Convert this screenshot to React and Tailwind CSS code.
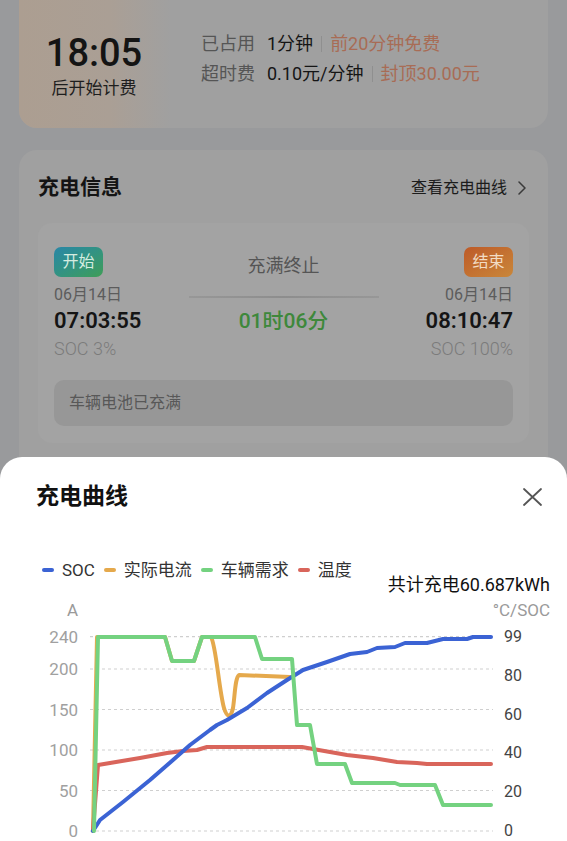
import React from 'react';

// ── chart data, in page pixels (plot box x 90–493, y 637–831) ───────────────
const LEFT_TICKS = [240, 200, 150, 100, 50, 0];
const RIGHT_TICKS = ['99', '80', '60', '40', '20', '0'];
const yOf = (v) => 831 - v * 0.81;

const GREEN = 'M94,831 L98,637 L165,637 L172,661 L194,661 L202,637 L255,637 L262,659 L292,659 L297,725 L310,725 L317,764 L345,764 L352,783 L395,783 L400,785 L435,785 L443,805 L491,805';
// actual current follows the demand until it falls away at ~212px
const ORANGE = 'M93,831 L97,637 L165,637 L172,661 L194,661 L202,637 L211,637 C216,645 219,690 224,708 C227,718 231,718 233,708 C235,695 235,678 239,675 L290,677';
const BLUE = [
    [93, 831], [100, 820], [123, 802], [150, 780], [173, 760], [190, 745], [210, 730], [217, 725],
    [227, 720], [247, 708], [267, 693], [287, 680], [303, 670], [327, 662], [350, 654], [367, 652],
    [377, 648], [395, 647], [405, 643], [427, 643], [443, 639], [467, 639], [473, 637], [491, 637],
];
const RED = [
    [93, 830], [98, 765], [110, 763], [140, 758], [167, 753], [183, 751], [197, 750], [207, 747],
    [302, 747], [313, 749], [347, 755], [373, 758], [397, 762], [417, 763], [427, 764], [491, 764],
];
const toPath = (pts) => 'M' + pts.map(([x, y]) => `${x},${y}`).join(' L');

const LEGEND = [
    { label: 'SOC', color: 'bg-[#3b63d4]' },
    { label: '实际电流', color: 'bg-[#e5a94c]' },
    { label: '车辆需求', color: 'bg-[#74d280]' },
    { label: '温度', color: 'bg-[#d9655b]' },
];

function BillingCard() {
    return (
        <div className="mx-[19px] h-[128px] rounded-b-[18px] bg-[#a0a0a0] flex">
            {/* countdown */}
            <div className="w-[152px] rounded-bl-[18px] bg-linear-to-r from-[#ac9e91] via-[#aa9f95] via-60% to-[#a0a0a0] flex flex-col items-center pt-[31px] pr-[2px]">
                <div className="text-[38px] leading-[44px] font-medium text-[#141414]">18:05</div>
                <div className="mt-[2px] text-[17px] leading-[22px] text-[#1e1e1e]">后开始计费</div>
            </div>

            {/* fee rules */}
            <div className="pl-[30px] pt-[31px] flex flex-col gap-[4px] text-[18px] leading-[26px]">
                <div className="flex items-center">
                    <span className="w-[66px] text-[#555]">已占用</span>
                    <span className="text-[#151515]">1分钟</span>
                    <span className="mx-[8px] w-px h-[16px] bg-[#8f8f8f]" />
                    <span className="text-[#a86c55]">前20分钟免费</span>
                </div>
                <div className="flex items-center">
                    <span className="w-[66px] text-[#555]">超时费</span>
                    <span className="text-[#151515]">0.10元/分钟</span>
                    <span className="mx-[8px] w-px h-[16px] bg-[#8f8f8f]" />
                    <span className="text-[#a86c55]">封顶30.00元</span>
                </div>
            </div>
        </div>
    );
}

function Endpoint({ badge, badgeClass, date, time, soc, align }) {
    return (
        <div className={`flex flex-col ${align}`}>
            <div className={`h-[30px] w-[49px] rounded-[7px] flex items-center justify-center text-[16px] ${badgeClass}`}>
                {badge}
            </div>
            <div className="mt-[7px] text-[16px] leading-[22px] text-[#5c5c5c]">{date}</div>
            <div className="mt-[2px] text-[22px] leading-[26px] font-semibold text-[#151515]">{time}</div>
            <div className="mt-[4px] text-[18px] leading-[22px] font-light text-[#7b7b7b]">{soc}</div>
        </div>
    );
}

function ChargeInfoCard() {
    return (
        <div className="mx-[19px] mt-[22px] h-[460px] rounded-[18px] bg-[#a0a0a0] px-[19px] pt-[26px]">
            {/* Header */}
            <div className="flex items-center justify-between h-[24px]">
                <span className="text-[21px] font-semibold text-[#141414]">充电信息</span>
                <span className="flex items-center text-[16px] text-[#1c1c1c] mr-[3px]">
                    查看充电曲线
                    <svg width="8" height="14" viewBox="0 0 8 14" className="ml-[11px]">
                        <path d="M1,1 L7,7 L1,13" fill="none" stroke="#3a3a3a" strokeWidth="1.5" strokeLinecap="round" strokeLinejoin="round" />
                    </svg>
                </span>
            </div>

            {/* Session box */}
            <div className="mt-[23px] rounded-[14px] bg-[#a3a3a3] px-[16px] pt-[24px] pb-[17px]">
                <div className="grid grid-cols-[1fr_190px_1fr]">
                    <Endpoint
                        badge="开始"
                        badgeClass="bg-linear-to-br from-[#2a86a6] to-[#3f9d55] text-[#d5ece0]"
                        date="06月14日"
                        time="07:03:55"
                        soc="SOC 3%"
                        align="items-start"
                    />
                    <div className="flex flex-col items-center pt-[8px]">
                        <div className="text-[18px] leading-[22px] text-[#555]">充满终止</div>
                        <div className="mt-[19px] h-[2px] w-full bg-linear-to-r from-[#979797] via-[#8d8d8d] to-[#979797]" />
                        <div className="mt-[10px] text-[21px] leading-[26px] font-medium text-[#3e883b]">01时06分</div>
                    </div>
                    <Endpoint
                        badge="结束"
                        badgeClass="bg-linear-to-br from-[#bd5a28] to-[#c9873a] text-[#f2dcc4]"
                        date="06月14日"
                        time="08:10:47"
                        soc="SOC 100%"
                        align="items-end"
                    />
                </div>
                <div className="mt-[20px] h-[46px] rounded-[10px] bg-[#979797] pl-[15px] flex items-center text-[16px] text-[#585858]">
                    车辆电池已充满
                </div>
            </div>
        </div>
    );
}

function CurveChart() {
    return (
        <div className="relative h-[221px]">
            <svg width="567" height="221" viewBox="0 620 567 221" className="absolute left-0 top-0">
                {LEFT_TICKS.map((v) => (
                    <line key={v} x1="90" x2="493" y1={yOf(v)} y2={yOf(v)} stroke="#cfcfcf" strokeWidth="1.2" strokeDasharray="3 3" />
                ))}
                <g fill="none" strokeWidth="4" strokeLinecap="round" strokeLinejoin="round">
                    <path d={ORANGE} stroke="#e5a94c" />
                    <path d={toPath(RED)} stroke="#d9655b" />
                    <path d={toPath(BLUE)} stroke="#3b63d4" />
                    <path d={GREEN} stroke="#74d280" />
                </g>
            </svg>

            {/* left axis (A) */}
            {LEFT_TICKS.map((v) => (
                <span
                    key={v}
                    className="absolute left-0 w-[78px] text-right text-[17px] leading-[20px] text-[#a0a0a0]"
                    style={{ top: yOf(v) - 620 - 10 }}
                >
                    {v}
                </span>
            ))}

            {/* right axis (°C / SOC) */}
            <div className="absolute left-[504px] top-[7px] h-[214px] flex flex-col justify-between text-[16px] leading-[20px] text-[#444]">
                {RIGHT_TICKS.map((t) => (
                    <span key={t}>{t}</span>
                ))}
            </div>
        </div>
    );
}

function CurveSheet() {
    return (
        <div className="absolute left-0 right-0 top-[457px] bottom-0 rounded-t-[22px] bg-white">
            {/* Title */}
            <div className="flex items-center justify-between pl-[36px] pr-[25px] pt-[25px]">
                <h2 className="text-[23px] leading-[30px] font-bold text-[#111]">充电曲线</h2>
                <svg width="19" height="18" viewBox="0 0 19 18">
                    <path d="M1,1 L18,17 M18,1 L1,17" stroke="#555" strokeWidth="1.8" strokeLinecap="round" />
                </svg>
            </div>

            {/* Legend + total */}
            <div className="mt-[47px] flex items-start justify-between pl-[42px] pr-[17px]">
                <div className="flex items-center gap-[9px] h-[22px] text-[17px] leading-[22px] text-[#333]">
                    {LEGEND.map((item) => (
                        <div key={item.label} className="flex items-center gap-[8px]">
                            <span className={`w-[12px] h-[4px] rounded-full ${item.color}`} />
                            <span>{item.label}</span>
                        </div>
                    ))}
                </div>
                <div className="mt-[15px] text-[18px] leading-[22px] text-[#111]">共计充电60.687kWh</div>
            </div>

            {/* Units */}
            <div className="mt-[4px] h-[20px] flex justify-between pr-[17px] text-[17px] leading-[20px] text-[#9a9a9a]">
                <span className="w-[78px] text-right">A</span>
                <span>°C/SOC</span>
            </div>

            <CurveChart />
        </div>
    );
}

export default function App() {
    return (
        <div className="relative w-[567px] h-[841px] overflow-hidden bg-[#999a9c] font-[Roboto,'Noto_Sans_CJK_SC',sans-serif]">
            <BillingCard />
            <ChargeInfoCard />
            <CurveSheet />
        </div>
    );
}
